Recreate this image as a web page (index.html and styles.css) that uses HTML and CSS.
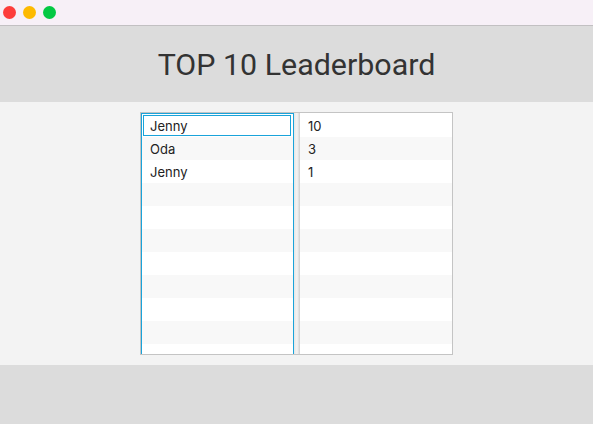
FILE: index.html
```html
<!DOCTYPE html>
<html>
<head>
<meta charset="utf-8">
<link rel="stylesheet" href="styles.css">
</head>
<body>
<div class="window">
  <div class="titlebar">
    <span class="light red"></span>
    <span class="light yellow"></span>
    <span class="light green"></span>
  </div>
  <div class="header"><h1 class="title">TOP 10 Leaderboard</h1></div>
  <div class="content">
    <div class="split">
      <div class="list list-names">
        <div class="row selected"><span class="cell">Jenny</span></div>
        <div class="row"><span class="cell">Oda</span></div>
        <div class="row"><span class="cell">Jenny</span></div>
        <div class="row"></div><div class="row"></div><div class="row"></div>
        <div class="row"></div><div class="row"></div><div class="row"></div>
        <div class="row"></div><div class="row"></div>
      </div>
      <div class="divider"></div>
      <div class="list list-scores">
        <div class="row"><span class="cell">10</span></div>
        <div class="row"><span class="cell">3</span></div>
        <div class="row"><span class="cell">1</span></div>
        <div class="row"></div><div class="row"></div><div class="row"></div>
        <div class="row"></div><div class="row"></div><div class="row"></div>
        <div class="row"></div><div class="row"></div>
      </div>
    </div>
  </div>
  <div class="footer"></div>
</div>
</body>
</html>
```

FILE: styles.css
```css
* { box-sizing: border-box; }
html, body { margin: 0; padding: 0; }
body {
  width: 593px;
  height: 424px;
  overflow: hidden;
  font-family: Inter, "Noto Sans", sans-serif;
  color: #222;
}
.window { display: flex; flex-direction: column; height: 424px; }
.titlebar {
  height: 26px;
  background: #f7f0f7;
  border-bottom: 1px solid #c2c0c2;
  display: flex;
  align-items: center;
  gap: 7px;
  padding: 0 0 1px 3px;
}
.light { width: 13px; height: 13px; border-radius: 50%; display: block; }
.red { background: #fd3d3b; }
.yellow { background: #fdba00; }
.green { background: #03c943; }
.header {
  height: 76px;
  background: #dcdcdc;
  display: flex;
  align-items: center;
  justify-content: center;
}
.title {
  margin: 0;
  font-family: Roboto, "Noto Sans", sans-serif;
  font-size: 30.4px;
  font-weight: 400;
  color: #333;
}
.content {
  height: 263px;
  background: #f3f3f3;
  padding: 10px 0;
  display: flex;
  justify-content: center;
}
.split {
  width: 313px;
  height: 243px;
  border: 1px solid #c4c4c4;
  display: flex;
  background: #fff;
  overflow: hidden;
}
.list {
  overflow: hidden;
  padding: 1px 0 0 0;
}
.list-names {
  width: 153px;
  padding: 1px 1px 0 1px;
  position: relative;
}
.list-names::after {
  content: "";
  position: absolute;
  left: 0;
  top: 0;
  right: 0;
  bottom: -2px;
  border: 1px solid #1aa3da;
  pointer-events: none;
}
.list-scores { flex: 1; }
.divider {
  width: 6px;
  background: linear-gradient(to right, #e6e6e6 0, #f4f4f4 50%, #cfcfcf 100%);
}
.row {
  height: 23px;
  background: #fff;
  display: flex;
  align-items: center;
  font-size: 13px;
}
.row:nth-child(even) { background: #f8f8f8; }
.cell { padding-left: 8px; }
.row.selected {
  border: 1px solid #1aa3da;
  margin: 1px 2px 1px 1px;
  height: 21px;
}
.row.selected .cell { padding-left: 6px; }
.footer { flex: 1; background: #dcdcdc; }
```
